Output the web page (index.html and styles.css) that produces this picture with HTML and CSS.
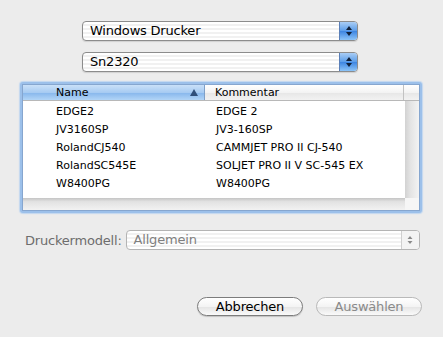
FILE: index.html
```html
<!DOCTYPE html>
<html lang="de">
<head>
    <meta charset="UTF-8">
    <title>Drucker auswählen</title>
    <link rel="stylesheet" href="styles.css">
</head>
<body>
    <div class="dialog">
        <div class="popups">
            <div class="popup">
                <span class="popup-label">Windows Drucker</span>
                <span class="popup-arrows">
                    <svg width="8" height="12" viewBox="0 0 8 12"><path d="M4 1 L7 5 L1 5 Z M1 7 L7 7 L4 11 Z" fill="#10213a"/></svg>
                </span>
            </div>
            <div class="popup">
                <span class="popup-label">Sn2320</span>
                <span class="popup-arrows">
                    <svg width="8" height="12" viewBox="0 0 8 12"><path d="M4 1 L7 5 L1 5 Z M1 7 L7 7 L4 11 Z" fill="#10213a"/></svg>
                </span>
            </div>
        </div>

        <div class="table-ring">
            <div class="table">
                <div class="table-head">
                    <div class="th th-name sorted">Name<span class="sort-arrow"></span></div>
                    <div class="th th-comment">Kommentar</div>
                    <div class="th th-rest"></div>
                </div>
                <div class="table-body">
                    <div class="rows">
                        <div class="row"><span class="c1">EDGE2</span><span class="c2">EDGE 2</span></div>
                        <div class="row"><span class="c1">JV3160SP</span><span class="c2">JV3-160SP</span></div>
                        <div class="row"><span class="c1">RolandCJ540</span><span class="c2">CAMMJET PRO II CJ-540</span></div>
                        <div class="row"><span class="c1">RolandSC545E</span><span class="c2">SOLJET PRO II V SC-545 EX</span></div>
                        <div class="row"><span class="c1">W8400PG</span><span class="c2">W8400PG</span></div>
                    </div>
                    <div class="vscroll"></div>
                    <div class="hscroll"></div>
                    <div class="corner"></div>
                </div>
            </div>
        </div>

        <div class="model-row">
            <span class="model-label">Druckermodell:</span>
            <div class="popup popup-disabled">
                <span class="popup-label">Allgemein</span>
                <span class="popup-arrows">
                    <svg width="8" height="12" viewBox="0 0 8 12"><path d="M4 2 L6.5 5 L1.5 5 Z M1.5 7 L6.5 7 L4 10 Z" fill="#8a8a8a"/></svg>
                </span>
            </div>
        </div>

        <div class="buttons">
            <button class="btn">Abbrechen</button>
            <button class="btn" disabled>Auswählen</button>
        </div>
    </div>
</body>
</html>
```

FILE: styles.css
```css
* {
    margin: 0;
    padding: 0;
    box-sizing: border-box;
}

body {
    font-family: "DejaVu Sans", "Liberation Sans", sans-serif;
    background: #ececec;
    color: #000;
    width: 443px;
    height: 337px;
    overflow: hidden;
}

.dialog {
    padding-top: 21px;
}

/* popup buttons */

.popups {
    display: flex;
    flex-direction: column;
    gap: 11px;
    padding-left: 82px;
}

.popup {
    display: flex;
    align-items: stretch;
    width: 276px;
    height: 20px;
    border: 1px solid #8c8c8c;
    border-radius: 4px;
    background: repeating-linear-gradient(180deg, #ffffff 0px, #ffffff 2px, #f1f1f1 2px, #f1f1f1 4px);
    box-shadow: 0 1px 1px rgba(0, 0, 0, 0.12);
    overflow: hidden;
}

.popup-label {
    flex: 1;
    font-size: 13px;
    line-height: 18px;
    padding-left: 7px;
    letter-spacing: -0.2px;
}

.popup-arrows {
    width: 18px;
    display: flex;
    align-items: center;
    justify-content: center;
    border-left: 1px solid #5a7fb8;
    background: linear-gradient(180deg, #a9cdf5 0%, #5d9ee9 48%, #3e86e2 52%, #8cc4f8 100%);
}

/* table */

.table-ring {
    margin: 10px 0 0 20px;
    width: 402px;
    padding: 2px;
    border-radius: 3px;
    background: #9cc0ea;
    box-shadow: 0 0 1px 1px #c3d8f0;
}

.table {
    background: #fff;
    border: 1px solid #86a6cf;
}

.table-head {
    display: flex;
    height: 16px;
    font-size: 11px;
    line-height: 15px;
    border-bottom: 1px solid #b8b8b8;
}

.th {
    background: linear-gradient(180deg, #ffffff 0%, #f3f3f3 50%, #e6e6e6 51%, #f2f2f2 100%);
    border-right: 1px solid #c2c2c2;
    white-space: nowrap;
}

.th-name {
    width: 182px;
    padding-left: 33px;
    position: relative;
}

.th-name.sorted {
    background: linear-gradient(180deg, #c9e0f8 0%, #a7cbf2 50%, #86b6ec 51%, #b2d5f7 100%);
    border-right-color: #7fa0c8;
}

.sort-arrow {
    position: absolute;
    right: 6px;
    top: 4px;
    width: 0;
    height: 0;
    border-left: 4px solid transparent;
    border-right: 4px solid transparent;
    border-bottom: 7px solid #2f4f7a;
}

.th-comment {
    width: 199px;
    padding-left: 10px;
}

.th-rest {
    flex: 1;
    border-right: none;
}

.table-body {
    display: grid;
    grid-template-columns: 1fr 14px;
    grid-template-rows: 97px 12px;
}

.rows {
    padding-top: 2px;
    font-size: 11px;
}

.row {
    display: flex;
    height: 18px;
    line-height: 18px;
    white-space: nowrap;
}

.c1 {
    width: 182px;
    padding-left: 33px;
}

.c2 {
    padding-left: 11px;
}

.vscroll {
    background: linear-gradient(90deg, #d2d2d2 0%, #e4e4e4 40%, #f3f3f3 100%);
}

.hscroll {
    background: linear-gradient(180deg, #c4c4c4 0%, #e2e2e2 30%, #f2f2f2 100%);
}

.corner {
    background: #f6f6f6;
}

/* model row */

.model-row {
    display: flex;
    align-items: center;
    gap: 4px;
    margin: 17px 0 0 25px;
}

.model-label {
    font-size: 13px;
    color: #6d6d6d;
    letter-spacing: -0.2px;
}

.popup-disabled {
    width: 294px;
    border-color: #b4b4b4;
    box-shadow: none;
}

.popup-disabled .popup-label {
    color: #7f7f7f;
}

.popup-disabled .popup-arrows {
    background: #f3f3f3;
    border-left: 1px solid #cfcfcf;
}

/* buttons */

.buttons {
    display: flex;
    justify-content: flex-end;
    gap: 13px;
    margin: 47px 21px 0 0;
}

.btn {
    font-family: inherit;
    font-size: 13px;
    height: 19px;
    width: 106px;
    border: 1px solid #7c7c7c;
    border-radius: 10px;
    background: linear-gradient(180deg, #ffffff 0%, #f4f4f4 50%, #e4e4e4 51%, #fafafa 100%);
    box-shadow: 0 1px 1px rgba(0, 0, 0, 0.18);
    color: #000;
    letter-spacing: -0.2px;
}

.btn:disabled {
    color: #8a8a8a;
    border-color: #b9b9b9;
    box-shadow: none;
}
```
